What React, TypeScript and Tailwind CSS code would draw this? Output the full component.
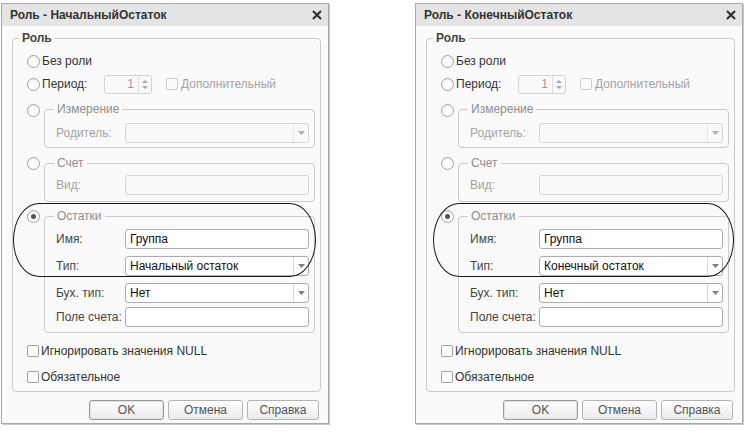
import React from "react";

function Radio({ checked = false }: { checked?: boolean }) {
  return (
    <span className="w-[13px] h-[13px] rounded-full border border-[#a2a2a2] bg-white flex items-center justify-center shrink-0 shadow-[inset_0_1px_2px_rgba(0,0,0,0.08)]">
      {checked && <span className="w-[5px] h-[5px] rounded-full bg-[#555]" />}
    </span>
  );
}

function Check({ disabled = false }: { disabled?: boolean }) {
  return (
    <span
      className={`block w-[12px] h-[12px] rounded-[2px] border shrink-0 ${
        disabled ? "border-[#cfcfcf] bg-[#fbfbfb]" : "border-[#a2a2a2] bg-white"
      }`}
    />
  );
}

function Arrow() {
  return (
    <svg width="7" height="4" viewBox="0 0 7 4">
      <path d="M0 0H7L3.5 4Z" fill="#7d7d7d" />
    </svg>
  );
}

function Field({
  value = "",
  disabled = false,
  combo = false,
}: {
  value?: string;
  disabled?: boolean;
  combo?: boolean;
}) {
  return (
    <div
      className={`h-[20px] flex-1 rounded-[3px] border flex items-stretch ${
        disabled ? "border-[#d6d6d6] bg-[#f9f9f9]" : "border-[#aeaeae] bg-white"
      }`}
    >
      <span className="flex-1 pl-[4px] text-[12px] leading-[18px] text-[#111]">{value}</span>
      {combo && (
        <span
          className={`w-[15px] border-l flex items-center justify-center ${
            disabled ? "border-[#e0e0e0] opacity-60" : "border-[#d8d8d8]"
          }`}
        >
          <Arrow />
        </span>
      )}
    </div>
  );
}

function FieldRow({
  label,
  disabledLabel = false,
  children,
  className = "",
}: {
  label: string;
  disabledLabel?: boolean;
  children: React.ReactNode;
  className?: string;
}) {
  return (
    <div className={`flex items-center ${className}`}>
      <span
        className={`w-[69px] shrink-0 text-[12px] ${
          disabledLabel ? "text-[#a3a3a3]" : "text-[#444]"
        }`}
      >
        {label}
      </span>
      {children}
    </div>
  );
}

function Group({
  legend,
  children,
  className = "",
}: {
  legend: string;
  children: React.ReactNode;
  className?: string;
}) {
  return (
    <fieldset className="flex-1 border border-[#cbcbcb] rounded-[4px]">
      <legend className="ml-[9px] px-[3px] text-[12px] leading-[14px] text-[#8e8e8e]">
        {legend}
      </legend>
      <div className={`pl-[11px] pr-[5px] ${className}`}>{children}</div>
    </fieldset>
  );
}

function Button({ label, def = false, w }: { label: string; def?: boolean; w: string }) {
  return (
    <div
      className={`${w} h-[20px] rounded-[3px] border flex items-center justify-center text-[12px] text-[#555] bg-gradient-to-b from-[#fefefe] to-[#ebebeb] ${
        def
          ? "border-[#9a9a9a] shadow-[inset_0_0_0_1px_#e2e2e2]"
          : "border-[#b4b4b4]"
      }`}
    >
      {label}
    </div>
  );
}

function Dialog({
  title,
  typeValue,
  ovalLeft,
}: {
  title: string;
  typeValue: string;
  ovalLeft: string;
}) {
  return (
    <div className="relative w-[328px] border border-[#a9a9a9] bg-[#fafafa] flex flex-col shadow-[1px_1px_0_#c8c8c8]">
      <div className="h-[22px] bg-[#e4e4e4] flex items-center justify-between pl-[8px] pr-[6px]">
        <span className="text-[12px] font-bold text-[#333]">{title}</span>
        <svg width="10" height="10" viewBox="0 0 10 10">
          <path d="M1 1L9 9M9 1L1 9" stroke="#333" strokeWidth="2.2" />
        </svg>
      </div>
      <div className="flex flex-col pl-[10px] pr-[7px] pb-[3px]">
        <fieldset className="mt-[5px] border border-[#cbcbcb] rounded-[4px]">
          <legend className="ml-[6px] px-[3px] text-[12px] leading-[14px] font-bold text-[#444]">
            Роль
          </legend>
          <div className="pl-[14px] pr-[5px] pt-[6px] pb-[4px] flex flex-col">
            <div className="h-[20px] flex items-center gap-[2px]">
              <Radio />
              <span className="text-[12px] text-[#333]">Без роли</span>
            </div>
            <div className="h-[20px] mt-[3px] flex items-center">
              <Radio />
              <span className="ml-[2px] w-[62px] text-[12px] text-[#333]">Период:</span>
              <div className="w-[48px] h-[19px] rounded-[3px] border border-[#d4d4d4] bg-[#f9f9f9] flex items-stretch">
                <span className="flex-1 text-right pr-[4px] text-[12px] leading-[17px] text-[#9a9a9a]">1</span>
                <span className="w-[13px] border-l border-[#dedede] flex flex-col items-center justify-center gap-[3px]">
                  <svg width="6" height="3" viewBox="0 0 6 3">
                    <path d="M0 3H6L3 0Z" fill="#a8a8a8" />
                  </svg>
                  <svg width="6" height="3" viewBox="0 0 6 3">
                    <path d="M0 0H6L3 3Z" fill="#a8a8a8" />
                  </svg>
                </span>
              </div>
              <span className="ml-[14px]">
                <Check disabled />
              </span>
              <span className="ml-[3px] text-[12px] text-[#a3a3a3]">Дополнительный</span>
            </div>

            <div className="mt-[8px] flex items-start gap-[4px]">
              <span className="mt-[2px]">
                <Radio />
              </span>
              <Group legend="Измерение" className="pt-[7px] pb-[4px]">
                <FieldRow label="Родитель:" disabledLabel>
                  <Field disabled combo />
                </FieldRow>
              </Group>
            </div>

            <div className="mt-[8px] flex items-start gap-[4px]">
              <span className="mt-[1px]">
                <Radio />
              </span>
              <Group legend="Счет" className="pt-[5px] pb-[6px]">
                <FieldRow label="Вид:" disabledLabel>
                  <Field disabled />
                </FieldRow>
              </Group>
            </div>

            <div className="mt-[7px] flex items-start gap-[4px]">
              <span className="mt-[1px]">
                <Radio checked />
              </span>
              <Group legend="Остатки" className="pt-[6px] pb-[5px]">
                <FieldRow label="Имя:">
                  <Field value="Группа" />
                </FieldRow>
                <FieldRow label="Тип:" className="mt-[7px]">
                  <Field value={typeValue} combo />
                </FieldRow>
                <FieldRow label="Бух. тип:" className="mt-[7px]">
                  <Field value="Нет" combo />
                </FieldRow>
                <FieldRow label="Поле счета:" className="mt-[4px]">
                  <Field />
                </FieldRow>
              </Group>
            </div>

            <div className="mt-[8px] h-[20px] flex items-center gap-[2px]">
              <Check />
              <span className="text-[12px] text-[#333]">Игнорировать значения NULL</span>
            </div>
            <div className="mt-[6px] h-[20px] flex items-center gap-[2px]">
              <Check />
              <span className="text-[12px] text-[#333]">Обязательное</span>
            </div>
          </div>
        </fieldset>

        <div className="mt-[8px] flex justify-end gap-[4px] pr-[2px]">
          <Button label="OK" def w="w-[75px]" />
          <Button label="Отмена" w="w-[75px]" />
          <Button label="Справка" w="w-[72px]" />
        </div>
      </div>
      <div
        className={`absolute top-[199px] h-[74px] ${ovalLeft} border-[1.5px] border-[#1a1a1a] rounded-[26px/37px] pointer-events-none`}
      />
    </div>
  );
}

export default function App() {
  return (
    <div className="w-[749px] h-[433px] bg-white pl-[1px] pt-[3px] flex items-start gap-[86px] font-['Liberation_Sans',Arial,sans-serif]">
      <Dialog
        title="Роль - НачальныйОстаток"
        typeValue="Начальный остаток"
        ovalLeft="left-[11px] w-[303px]"
      />
      <Dialog
        title="Роль - КонечныйОстаток"
        typeValue="Конечный остаток"
        ovalLeft="left-[17px] w-[301px]"
      />
    </div>
  );
}
